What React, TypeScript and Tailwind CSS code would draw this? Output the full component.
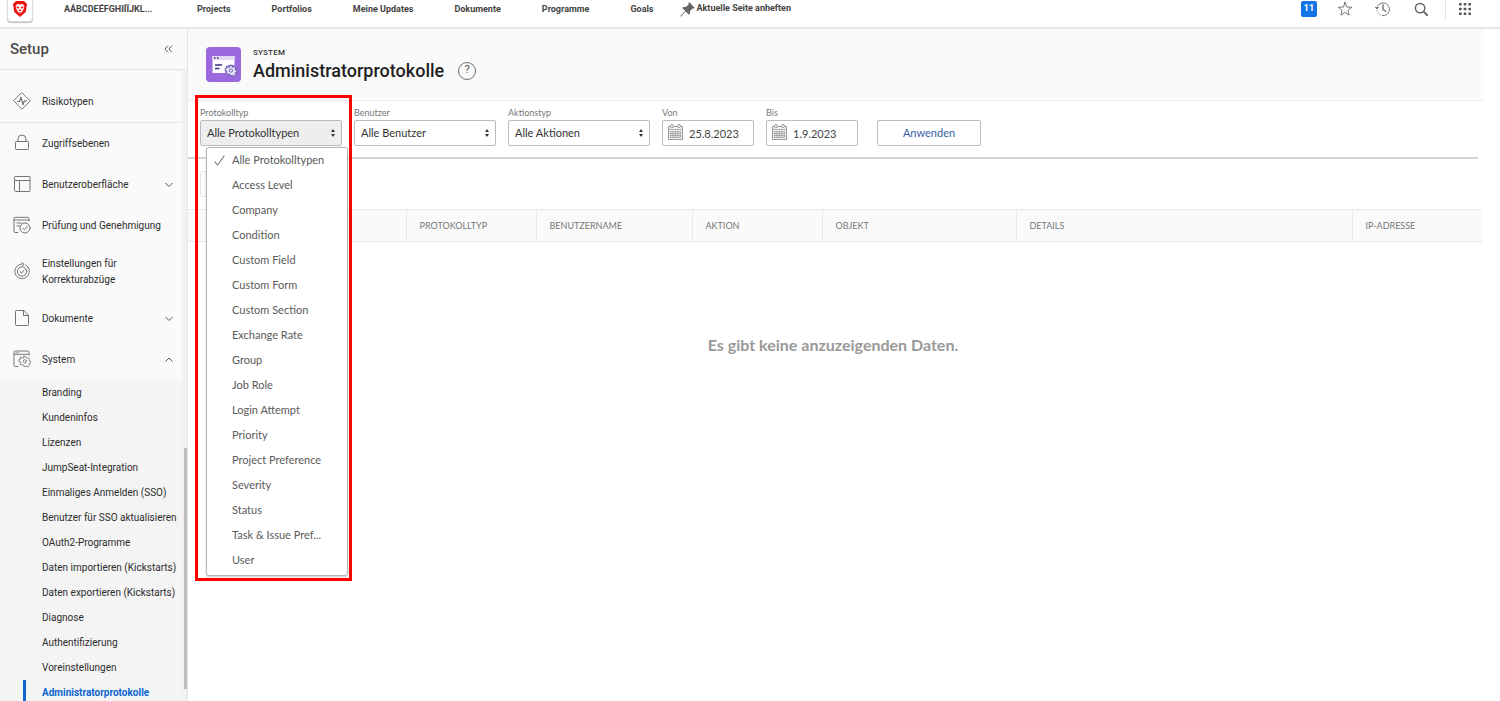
import { useState, type ReactNode } from 'react';

const navItems = ['Projects', 'Portfolios', 'Meine Updates', 'Dokumente', 'Programme', 'Goals'];

const logTypes = [
  'Alle Protokolltypen', 'Access Level', 'Company', 'Condition', 'Custom Field', 'Custom Form',
  'Custom Section', 'Exchange Rate', 'Group', 'Job Role', 'Login Attempt', 'Priority',
  'Project Preference', 'Severity', 'Status', 'Task & Issue Pref...', 'User',
];

const systemPages = [
  'Branding', 'Kundeninfos', 'Lizenzen', 'JumpSeat-Integration', 'Einmaliges Anmelden (SSO)',
  'Benutzer für SSO aktualisieren', 'OAuth2-Programme', 'Daten importieren (Kickstarts)',
  'Daten exportieren (Kickstarts)', 'Diagnose', 'Authentifizierung', 'Voreinstellungen',
  'Administratorprotokolle',
];

function Icon({ children, size = 18, className = '' }: { children: ReactNode; size?: number; className?: string }) {
  return (
    <svg aria-hidden="true" width={size} height={size} viewBox="0 0 18 18" fill="none" stroke="currentColor" strokeWidth="1" strokeLinecap="round" strokeLinejoin="round" className={`shrink-0 ${className}`}>
      {children}
    </svg>
  );
}

function Gear({ x, y, scale = 1 }: { x: number; y: number; scale?: number }) {
  return (
    <g transform={`translate(${x} ${y}) scale(${scale})`}>
      <path d="M-1 -5h2l.4 1.6 1.2.5 1.4-.9 1.4 1.4-.9 1.4.5 1.2 1.6.3v2l-1.6.3-.5 1.2.9 1.4-1.4 1.4-1.4-.9-1.2.5L1 6.2h-2l-.4-1.6-1.2-.5-1.4.9-1.4-1.4.9-1.4-.5-1.2-1.6-.3v-2l1.6-.3.5-1.2-.9-1.4L-4 -3.8l1.4.9 1.2-.5z" />
      <circle cx="0" cy=".6" r="1.8" />
    </g>
  );
}

const RiskIcon = () => (
  <Icon>
    <path d="M9 .8 17.2 9 9 17.2.8 9z" />
    <path d="M4.5 9.5h2L8 5.2l2 7.6 1.3-4h2.2" strokeWidth="1.2" />
  </Icon>
);
const LockIcon = () => (
  <Icon>
    <rect x="2.5" y="7.500" width="13" height="8" rx=".8" />
    <path d="M5 7.500V5a4 4 0 0 1 8 0v2.500" />
  </Icon>
);
const LayoutIcon = () => (
  <Icon>
    <rect x="1.5" y="1.5" width="15.500" height="15" rx="1" />
    <path d="M1.5 5.5H17M6.500 5.5v11" />
  </Icon>
);
const ReviewIcon = () => (
  <Icon>
    <path d="M4.8 16.5H2.2A1.2 1.2 0 0 1 1 15.3V2.5A1.2 1.2 0 0 1 2.2 1.3h12.6A1.2 1.2 0 0 1 16 2.5V5M1 4h15M4 7h5M4 10h2.5" />
    <circle cx="12" cy="12" r="5" />
    <path d="m9.8 12.2 1.6 1.6 2.8-3.4" />
  </Icon>
);
const ProofIcon = () => (
  <Icon>
    <path d="M12.800 3A7.300 7.300 0 1 1 9 2" />
    <path d="m9 .7 2 1.500-1.600 1.800M14.500 4.500l1 1.500" />
    <circle cx="9" cy="9.500" r="4.700" />
    <path d="m7 9.600 1.500 1.600L11.200 8" />
  </Icon>
);
const FileIcon = () => (
  <Icon>
    <path d="M10.500 1.500H3.300a.8.8 0 0 0-.8.8v13.400c0 .4.4.8.8.8h11.400a.8.8 0 0 0 .8-.8V6.500zM10.500 1.500v5h5" />
  </Icon>
);
const SystemIcon = () => (
  <Icon>
    <path d="M5 16.500H2.300A1.300 1.300 0 0 1 1 15.200V2.300A1.300 1.300 0 0 1 2.300 1h12.400A1.300 1.300 0 0 1 16 2.300V5M1 4.300h15M3 2.700h.5M5 2.700h.5" />
    <Gear x={11.8} y={10.800} scale={0.9} />
  </Icon>
);

function Chevron({ up = false }: { up?: boolean }) {
  return (
    <svg aria-hidden="true" width="8" height="6" viewBox="0 0 8 6" fill="none" stroke="#555" strokeWidth="1" className="shrink-0">
      <path d={up ? 'M.5 4.500 4 1l3.500 3.500' : 'M.5 1 4 4.500 7.500 1'} />
    </svg>
  );
}

function SideItem({ icon, label, chevron }: { icon: ReactNode; label: string; chevron?: 'up' | 'down' }) {
  return (
    <button type="button" aria-expanded={chevron ? chevron === 'up' : undefined} className="flex min-h-[41px] w-full items-center gap-[11px] py-2.5 pr-[9px] pl-[13px] text-left leading-4">
      <span className="pb-0.5 text-[#747474]">{icon}</span>
      <span className="flex-1">{label}</span>
      {chevron && <Chevron up={chevron === 'up'} />}
    </button>
  );
}

function Field({ id, label, children }: { id: string; label: string; children: ReactNode }) {
  return (
    <div className="relative">
      <label htmlFor={id} className="block text-[9px] leading-3 text-[#777]">{label}</label>
      <div className="relative flex pt-px">{children}</div>
    </div>
  );
}

function SelectBox({ id, options, value, onChange, active = false }: { id: string; options: string[]; value?: string; onChange?: (v: string) => void; active?: boolean }) {
  return (
    <>
      <select id={id} value={value} onChange={onChange ? (e) => onChange(e.target.value) : undefined} className={`h-[26px] w-[142px] appearance-none rounded-[2px] border border-[#bbb] pr-5 pl-1.5 text-[11px] text-[#333] ${active ? 'bg-[#eee]' : 'bg-white'}`}>
        {options.map((o) => <option key={o}>{o}</option>)}
      </select>
      <svg aria-hidden="true" width="6" height="8" viewBox="0 0 6 8" className="pointer-events-none absolute top-[10px] right-1.5 fill-[#333]">
        <path d="M3 0 5 3H1zM3 8 1 5h4z" />
      </svg>
    </>
  );
}

function DateBox({ id, value }: { id: string; value: string }) {
  return (
    <>
      <input id={id} type="text" defaultValue={value} className="h-[26px] w-[92px] rounded-[2px] border border-[#bbb] bg-white pr-1 pl-[26px] text-[11px] text-[#444]" />
      <svg aria-hidden="true" width="15" height="16" viewBox="0 0 15 16" fill="none" stroke="#999" className="pointer-events-none absolute top-[5px] left-1.5">
        <path d="M.5 2.500h14v13H.5z" fill="#f2f2f2" />
        <path d="M.5 5.500h14M2.500 7.500h10v6h-10zM2.500 9.500h10M2.500 11.500h10M5 7v7M7.500 7v7M10 7v7" strokeWidth=".8" />
        <circle cx="4" cy="2" r="1.500" fill="#fff" />
        <circle cx="11" cy="2" r="1.500" fill="#fff" />
      </svg>
    </>
  );
}

function TopBar() {
  return (
    <header className="flex h-[29px] shrink-0 items-center border-b-2 border-[#e6e6e6] bg-white pb-[9px] pl-[7px] font-[Roboto,sans-serif] text-[9px] font-bold text-[#444]">
      <a href="#home" aria-label="Start" className="flex size-[26px] shrink-0 items-center justify-center rounded-[4px] border border-[#ddd] bg-white shadow-[0_1px_1px_#bbb]">
        <svg aria-hidden="true" width="14" height="16" viewBox="0 0 14 16">
          <path d="M3 0h8l3 3-1.200 8L7 16l-5.800-5L0 3z" fill="#ee1411" />
          <path d="m3.600 3.600 1.700-.7L7 3.400l1.700-.5 1.700.7 1 1.700-1 3.200-1.200 2.200L7 12.600l-2.200-1.900-1.200-2.200-1-3.200z" fill="#fff" />
          <path d="m3.400 5.200 2.900 1-.4 1.400-2-.7zM10.600 5.200l-2.900 1 .4 1.400 2-.7zM5.300 9.300 7 8.500l1.700.8L7 10.400zM5.200 10.800l1.800.6 1.800-.6L7 12.100z" fill="#ee1411" />
        </svg>
      </a>
      <button type="button" className="ml-[31px] w-[85px] pt-0.5 text-left whitespace-nowrap">AÁBCDEÉFGHIÍÏJKL...</button>
      <nav aria-label="Hauptnavigation" className="ml-12 flex gap-[41px] pt-0.5 whitespace-nowrap">
        {navItems.map((n) => <a key={n} href="#nav">{n}</a>)}
      </nav>
      <button type="button" className="ml-[27px] flex items-center gap-px whitespace-nowrap">
        <svg aria-hidden="true" width="15" height="15" viewBox="0 0 15 15" fill="#666">
          <path d="M9.300.3 14.700 5.700l-.8.9-1.300-.2-2.700 2.800.1 2.600-1 1L5.700 9.500 1 14.400l-.7.2.2-.8L5.300 9 2.200 6l1-1 2.600.1 2.800-2.700L8.400 1.100z" />
        </svg>
        <span>Aktuelle Seite anheften</span>
      </button>
      <div className="ml-auto flex items-center pr-[29px] text-[#666]">
        <button type="button" aria-label="Benachrichtigungen" className="flex size-4 items-center justify-center rounded-[2px] bg-[#1473e6] text-white">11</button>
        <button type="button" aria-label="Favoriten" className="ml-5">
          <Icon size={16}><path d="m9 1.500 2 5.300 5.600.2-4.400 3.500 1.500 5.400L9 12.800l-4.700 3.100 1.500-5.400L1.400 7 7 6.800z" strokeLinejoin="miter" /></Icon>
        </button>
        <button type="button" aria-label="Verlauf" className="ml-[22px]">
          <Icon size={16}>
            <path d="M3 5.500A7.200 7.200 0 1 1 8 16.500" />
            <path d="M5.700 15.500h.1M3.600 13.500h.1M2.500 10.900h.1" strokeWidth="1.200" />
            <path d="m.8 7.500 1.200 1.300L3.600 7.500z" fill="currentColor" />
            <path d="M9 4.500v5l3 2" strokeWidth="1.500" />
          </Icon>
        </button>
        <button type="button" aria-label="Suchen" className="ml-[22px]">
          <Icon size={16}><circle cx="8" cy="8" r="5.300" strokeWidth="1.700" /><path d="m12.300 12.300 3.500 3.500" strokeWidth="2.200" /></Icon>
        </button>
        <span className="ml-4 h-[21px] w-px bg-[#e6e6e6]" />
        <button type="button" aria-label="Programme" className="ml-[13px]">
          <svg aria-hidden="true" width="12" height="12" viewBox="0 0 12 12" fill="#555">
            {[0, 4.7, 9.4].map((y) => [0, 4.7, 9.4].map((x) => <rect key={`${x}-${y}`} x={x} y={y} width="2.600" height="2.600" rx=".6" />))}
          </svg>
        </button>
      </div>
    </header>
  );
}

function Sidebar() {
  return (
    <aside className="relative flex w-[188px] shrink-0 flex-col overflow-hidden border-r border-[#e4e4e4] bg-[#fafafa] font-[Roboto,sans-serif] text-[10px] text-[#2c2c2c]">
      <div className="flex h-[41px] shrink-0 items-center justify-between border-b border-[#e4e4e4] pr-[14px] pl-2.5">
        <h2 className="text-[15px] font-medium text-[#4b4b4b]">Setup</h2>
        <button type="button" aria-label="Menü einklappen">
          <svg aria-hidden="true" width="9" height="8" viewBox="0 0 9 8" fill="none" stroke="#555" strokeWidth="1">
            <path d="M4 .7.900 4 4 7.300M8 .7 4.900 4 8 7.300" />
          </svg>
        </button>
      </div>
      <div className="flex min-h-0 flex-1">
        <nav aria-label="Setup" className="min-w-0 flex-1 overflow-hidden pt-[11px]">
          <div className="border-b border-[#e6e6e6]"><SideItem icon={<RiskIcon />} label="Risikotypen" /></div>
          <SideItem icon={<LockIcon />} label="Zugriffsebenen" />
          <SideItem icon={<LayoutIcon />} label="Benutzeroberfläche" chevron="down" />
          <SideItem icon={<ReviewIcon />} label="Prüfung und Genehmigung" />
          <SideItem icon={<ProofIcon />} label="Einstellungen für Korrekturabzüge" />
          <SideItem icon={<FileIcon />} label="Dokumente" chevron="down" />
          <SideItem icon={<SystemIcon />} label="System" chevron="up" />
          <ul className="bg-[#f4f4f4]">
            {systemPages.map((p, i) => (
              <li key={p}>
                {i === systemPages.length - 1 ? (
                  <a href="#page" aria-current="page" className="ml-[23px] flex h-[25px] items-center border-l-[3px] border-[#0d66d0] pl-4 font-bold whitespace-nowrap text-[#0d66d0]">{p}</a>
                ) : (
                  <a href="#page" className="flex h-[25px] items-center pl-[42px] whitespace-nowrap">{p}</a>
                )}
              </li>
            ))}
          </ul>
        </nav>
        <div aria-hidden="true" className="flex w-[5px] justify-end bg-[#f1f1f1] pt-[378px] pb-3">
          <div className="w-[3px] bg-[#bdbdbd]" />
        </div>
      </div>
    </aside>
  );
}

export default function App() {
  const [logType, setLogType] = useState(logTypes[0]);
  return (
    <div className="flex h-screen flex-col overflow-hidden bg-white">
      <TopBar />
      <div className="flex min-h-0 flex-1">
        <Sidebar />
        <main className="min-w-0 flex-1 font-[Lato,sans-serif]">
          <div className="mr-4 flex h-[72px] items-center gap-3 border-b border-[#ececec] bg-[#fafafa] pl-[18px] font-[Roboto,sans-serif]">
            <svg aria-hidden="true" width="35" height="35" viewBox="0 0 35 35" fill="none">
              <rect width="35" height="35" rx="4" fill="#9b69dd" />
              <rect x="6.500" y="9" width="22" height="17" fill="#fff" />
              <rect x="6.500" y="9" width="22" height="4" fill="#e4d9f5" />
              <path d="M8 11h1.500M11 11h1.500M9 18h7M9 21.500h4.500" stroke="#3a2d85" strokeWidth="1.400" />
              <circle cx="25" cy="23.500" r="6" fill="#9b69dd" />
              <g fill="#e9e0f8" stroke="#4b5aa8" strokeWidth=".9"><Gear x={25} y={23} scale={0.9} /></g>
            </svg>
            <div>
              <p className="text-[8px] leading-3 font-medium tracking-wide text-[#333]">SYSTEM</p>
              <div className="flex items-center gap-3.5">
                <h1 className="text-[18px] leading-6 font-medium text-[#1f1f1f]">Administratorprotokolle</h1>
                <button type="button" aria-label="Hilfe" className="flex size-[18px] items-center justify-center rounded-full border border-[#6e6e6e] text-[11px] text-[#555]">?</button>
              </div>
            </div>
          </div>
          <form onSubmit={(e) => e.preventDefault()} className="mr-[22px] flex items-end gap-3 border-b-2 border-[#d4d4d4] pt-1.5 pb-[11px] pl-3">
            <Field id="log-type" label="Protokolltyp">
              <SelectBox id="log-type" options={logTypes} value={logType} onChange={setLogType} active />
              <ul role="listbox" aria-label="Protokolltyp" className="absolute top-7 left-1.5 z-10 w-[142px] rounded-[3px] border border-[#b5b5b5] bg-white pb-0.5 text-[11px] text-[#5a5a5a] shadow-[0_1px_2px_#ccc]">
                {logTypes.map((t) => (
                  <li key={t} role="option" aria-selected={t === logType} onClick={() => setLogType(t)} className="flex h-[25px] items-center pl-[7px] whitespace-nowrap">
                    <span className="w-[18px]">
                      {t === logType && (
                        <svg aria-hidden="true" width="11" height="11" viewBox="0 0 11 11" fill="none" stroke="#555" strokeWidth="1"><path d="m.7 6.500 2.800 3.700L10.300.700" /></svg>
                      )}
                    </span>
                    {t}
                  </li>
                ))}
              </ul>
              <div className="pointer-events-none absolute -top-6 -left-[5px] z-20 h-[486px] w-[157px] border-3 border-[#f00]" />
            </Field>
            <Field id="user" label="Benutzer"><SelectBox id="user" options={['Alle Benutzer']} /></Field>
            <Field id="action" label="Aktionstyp"><SelectBox id="action" options={['Alle Aktionen']} /></Field>
            <Field id="from" label="Von"><DateBox id="from" value="25.8.2023" /></Field>
            <Field id="to" label="Bis"><DateBox id="to" value="1.9.2023" /></Field>
            <button type="submit" className="ml-[7px] h-[26px] w-[104px] rounded-[2px] border border-[#bbb] bg-white text-[11px] text-[#365ea8]">Anwenden</button>
          </form>
          <div className="py-3 pl-3">
            <button type="button" aria-label="Exportieren" className="block h-[26px] w-24 rounded-[2px] border border-[#e4e4e4] bg-white" />
          </div>
          <div className="mr-[18px]">
            <table className="w-full table-fixed border-collapse">
              <thead>
                <tr className="h-8 border-y border-[#e8e8e8] bg-[#fafafa] text-left text-[9px] text-[#777]">
                  <th scope="col" className="w-[218px] border-r border-[#e8e8e8]" aria-label="Datum" />
                  <th scope="col" className="w-[130px] border-r border-[#e8e8e8] pl-[13px] font-normal">PROTOKOLLTYP</th>
                  <th scope="col" className="w-[156px] border-r border-[#e8e8e8] pl-[13px] font-normal">BENUTZERNAME</th>
                  <th scope="col" className="w-[130px] border-r border-[#e8e8e8] pl-[13px] font-normal">AKTION</th>
                  <th scope="col" className="w-[194px] border-r border-[#e8e8e8] pl-[13px] font-normal">OBJEKT</th>
                  <th scope="col" className="border-r border-[#e8e8e8] pl-[13px] font-normal">DETAILS</th>
                  <th scope="col" className="w-[130px] pl-[13px] font-normal">IP-ADRESSE</th>
                </tr>
              </thead>
              <tbody>
                <tr>
                  <td colSpan={7} className="pt-[91px] pr-1 text-center text-[16px] leading-6 font-bold text-[#999]">Es gibt keine anzuzeigenden Daten.</td>
                </tr>
              </tbody>
            </table>
          </div>
        </main>
      </div>
    </div>
  );
}
